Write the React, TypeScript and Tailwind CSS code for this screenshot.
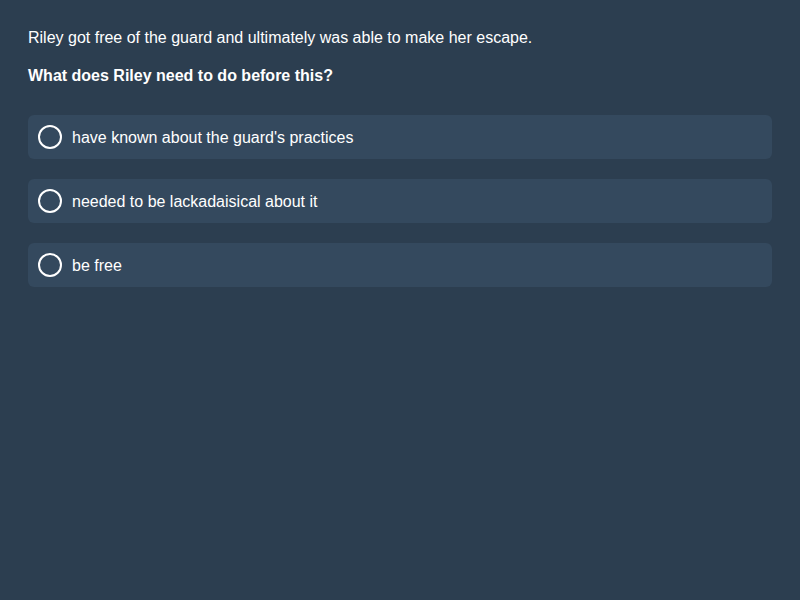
import React from 'react';

const options = [
  "have known about the guard's practices",
  'needed to be lackadaisical about it',
  'be free',
];

const App: React.FC = () => {
  return (
    <div className="min-h-screen w-full bg-[#2c3e50] text-white font-['Liberation_Sans',Arial,sans-serif] px-7 pt-[26px]">
      <p className="text-base leading-6">Riley got free of the guard and ultimately was able to make her escape.</p>
      <p className="text-base leading-6 font-bold mt-[14px]">What does Riley need to do before this?</p>

      <div className="flex flex-col gap-5 mt-[27px]">
        {options.map((opt) => (
          <div key={opt} className="flex items-center gap-[10px] h-11 px-[10px] bg-[#34495e] rounded-md">
            <span className="w-6 h-6 rounded-full border-2 border-white shrink-0"></span>
            <span className="text-base pt-[2px]">{opt}</span>
          </div>
        ))}
      </div>
    </div>
  );
};

export default App;
